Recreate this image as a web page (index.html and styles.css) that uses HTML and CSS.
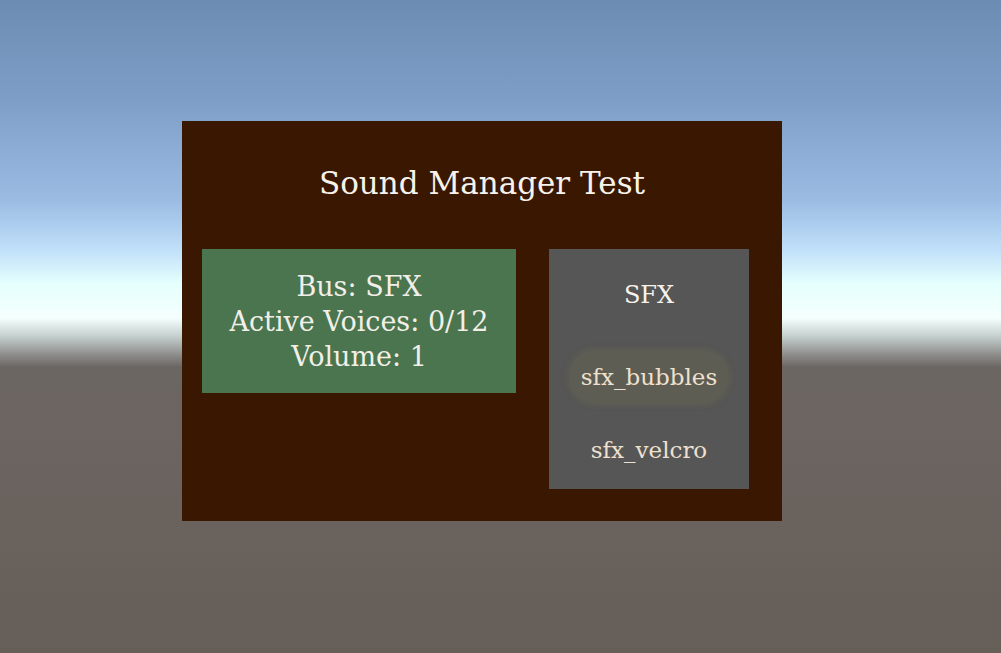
FILE: index.html
```html
<!DOCTYPE html>
<html>
<head>
<meta charset="utf-8">
<link rel="stylesheet" href="styles.css">
</head>
<body>
<div class="panel">
  <div class="title">Sound Manager Test</div>
  <div class="row">
    <div class="bus-info">
      <div>Bus: SFX</div>
      <div>Active Voices: 0/12</div>
      <div>Volume: 1</div>
    </div>
    <div class="bus-list">
      <div class="bus-name">SFX</div>
      <div class="item item-hover">sfx_bubbles</div>
      <div class="item item-last">sfx_velcro</div>
    </div>
  </div>
</div>
</body>
</html>
```
FILE: styles.css
```css
html, body {
  margin: 0;
  padding: 0;
}
body {
  width: 1001px;
  height: 653px;
  overflow: hidden;
  font-family: "DejaVu Serif", "Liberation Serif", serif;
  background: linear-gradient(to bottom,
    #6d8cb3 0px,
    #7e9ec7 100px,
    #9bbbe3 200px,
    #c0e0fa 250px,
    #e4fffd 283px,
    #f5fffd 318px,
    #c8d4d2 335px,
    #8d8c8a 355px,
    #6c6663 367px,
    #6b635f 480px,
    #655f58 653px);
}
.panel {
  margin: 121px 0 0 182px;
  width: 600px;
  height: 400px;
  background: #3a1700;
  display: flex;
  flex-direction: column;
}
.title {
  padding-top: 40px;
  height: 88px;
  line-height: 44px;
  font-size: 31px;
  color: #f7f3ec;
  text-align: center;
}
.row {
  display: flex;
  align-items: flex-start;
  padding-left: 20px;
  gap: 33px;
}
.bus-info {
  width: 314px;
  height: 144px;
  background: #4a754f;
  color: #f2efe8;
  font-size: 27px;
  line-height: 35px;
  display: flex;
  flex-direction: column;
  justify-content: center;
  align-items: center;
}
.bus-list {
  width: 200px;
  height: 240px;
  background: #565656;
  display: flex;
  flex-direction: column;
  align-items: center;
  padding-top: 30px;
  box-sizing: border-box;
}
.bus-name {
  font-size: 24px;
  line-height: 32px;
  color: #f7f3ec;
}
.item {
  font-size: 23px;
  color: #efe1cf;
  text-align: center;
}
.item-hover {
  margin-top: 39px;
  width: 160px;
  height: 54px;
  line-height: 54px;
  border-radius: 27px / 27px;
  background: #5e5d53;
  box-shadow: 0 0 5px 2px rgba(94, 93, 83, 0.9);
}
.item-last {
  margin-top: 30px;
  line-height: 32px;
}
```
